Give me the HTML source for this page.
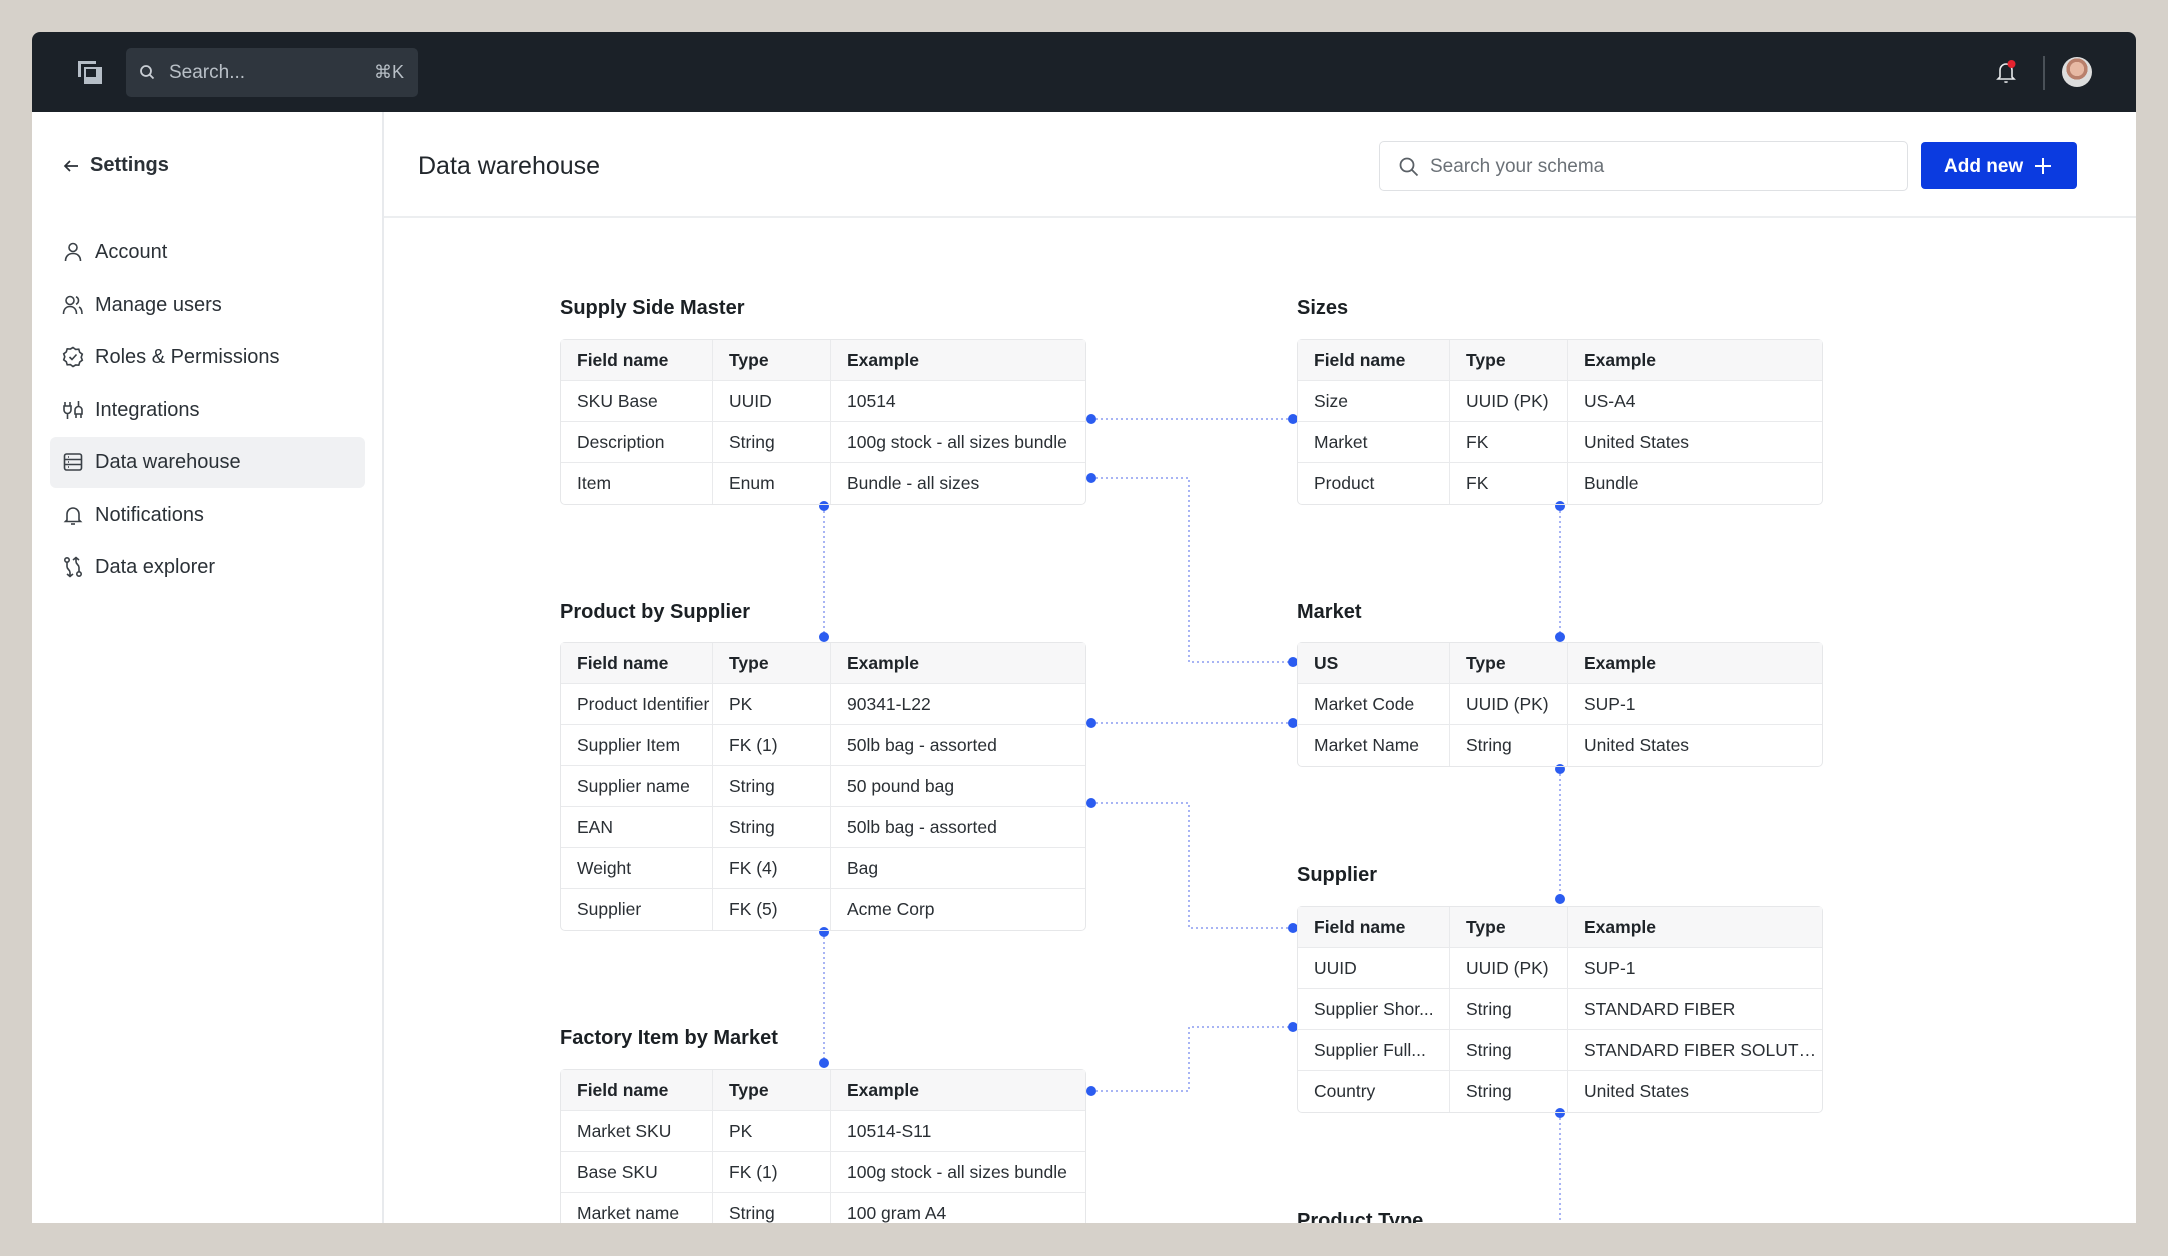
<!DOCTYPE html>
<html><head><meta charset="utf-8"><style>
*{box-sizing:border-box;margin:0;padding:0}
body{width:2168px;height:1256px;background:#d6d1ca;font-family:"Liberation Sans",Arial,sans-serif;position:relative;overflow:hidden;color:#1d2227}
#frame{position:absolute;left:32px;top:32px;width:2104px;height:1191px;background:#fff;border-radius:8px 8px 0 0;overflow:hidden}
#top{position:absolute;left:0;top:0;width:2104px;height:80px;background:#1b2128}
.abs{position:absolute}
#side{position:absolute;left:0;top:80px;width:352px;height:1111px;border-right:2px solid #e8eaed}
.nav{position:absolute;left:18px;width:315px;height:51px;font-size:20px;color:#2b3137;display:flex;align-items:center;padding-left:45px}
.nav svg{position:absolute;left:12px;top:14px}
.nav.act{background:#f0f1f3;border-radius:6px}
.ttl{position:absolute;font-size:20px;font-weight:bold;color:#1b2024}
table{position:absolute;border-collapse:separate;border-spacing:0;border:1.5px solid #e6e7e9;border-radius:5px;width:526px;font-size:17.5px;color:#2a2f34;table-layout:fixed}
td{height:41px;border-bottom:1.5px solid #e9eaec;padding-left:16px;padding-right:4px;white-space:nowrap;overflow:hidden;text-overflow:ellipsis}
tr:last-child td{border-bottom:none}
td:nth-child(1){width:152px;border-right:1.5px solid #e9eaec;padding-right:0;text-overflow:clip}
td:nth-child(2){width:118px;border-right:1.5px solid #e9eaec}
tr.h td{background:#f7f7f8;font-weight:bold;color:#1f2429}
</style></head><body>
<div id="frame">
<div id="top">
 <div class="abs" style="left:46px;top:29px;width:18px;height:16px;background:#b6bec7"></div>
 <div class="abs" style="left:52px;top:35px;width:18px;height:17px;background:#b6bec7;border:3px solid #1b2128;box-sizing:content-box;margin:-3px"></div>
 <div class="abs" style="left:54px;top:37px;width:10px;height:8px;background:#1b2128"></div>
 <div class="abs" style="left:94px;top:16px;width:292px;height:49px;background:#2f363e;border-radius:5px"></div>
 <svg class="abs" style="left:107px;top:32px" width="16" height="16" viewBox="0 0 16 16"><circle cx="7" cy="7" r="5" fill="none" stroke="#c9ced4" stroke-width="1.8"/><path d="M11 11l3.5 3.5" stroke="#c9ced4" stroke-width="1.8"/></svg>
 <div class="abs" style="left:137px;top:30px;font-size:19px;color:#b9c0c7">Search...</div>
 <div class="abs" style="left:342px;top:30px;font-size:18px;color:#b9c0c7">⌘K</div>
 <svg class="abs" style="left:1963px;top:27px" width="24" height="26" viewBox="0 0 24 26"><path d="M5 18V11a6 6 0 0 1 12 0v7l2 2H3z" fill="none" stroke="#e8eaec" stroke-width="1.6"/><path d="M9.5 22.5a2 2 0 0 0 3 0" stroke="#e8eaec" stroke-width="1.5" fill="none"/><circle cx="16.5" cy="5" r="4" fill="#e5232f"/></svg>
 <div class="abs" style="left:2011px;top:24px;width:2px;height:34px;background:#4a5158"></div>
 <div class="abs" style="left:2030px;top:25px;width:30px;height:30px;border-radius:50%;background:radial-gradient(circle at 50% 40%,#e7b9a4 0 30%,#b9806c 31% 45%,#ddd 46%)"></div>
</div>
<div id="side">
 <svg class="abs" style="left:30px;top:46px" width="18" height="16" viewBox="0 0 18 16"><path d="M16 8H3M8 3L3 8l5 5" fill="none" stroke="#2b3137" stroke-width="1.7"/></svg>
 <div class="abs" style="left:58px;top:42px;font-size:20px;font-weight:bold;color:#2b3137">Settings</div>
 <div class="nav" style="top:115px"><svg width="22" height="22" viewBox="0 0 22 22" fill="none" stroke="#3a4046" stroke-width="1.6"><circle cx="11" cy="6.5" r="4"/><path d="M3.5 20c0-5 3.3-7.5 7.5-7.5s7.5 2.5 7.5 7.5"/></svg>Account</div>
 <div class="nav" style="top:168px"><svg width="22" height="22" viewBox="0 0 22 22" fill="none" stroke="#3a4046" stroke-width="1.6"><circle cx="8" cy="6.5" r="4"/><path d="M1.5 20c0-5 2.8-7.5 6.5-7.5s6.5 2.5 6.5 7.5M14 2.8a4 4 0 0 1 0 7.4M17 13c2 1 3 3 3 7"/></svg>Manage users</div>
 <div class="nav" style="top:220px"><svg width="22" height="22" viewBox="0 0 22 22" fill="none" stroke="#3a4046" stroke-width="1.6"><path d="M11 1.5l2.6 1.9 3.2-.2.9 3.1 2.6 1.9-1.1 3 1.1 3-2.6 1.9-.9 3.1-3.2-.2L11 20.5l-2.6-1.9-3.2.2-.9-3.1L1.7 13.8l1.1-3-1.1-3 2.6-1.9.9-3.1 3.2.2z"/><path d="M7.5 11l2.5 2.5 4.5-5"/></svg>Roles &amp; Permissions</div>
 <div class="nav" style="top:273px"><svg width="22" height="22" viewBox="0 0 22 22" fill="none" stroke="#3a4046" stroke-width="1.6"><path d="M3 3v4M8 3v4M2 7h7v4a3.5 3.5 0 0 1-7 0zM5.5 14.5V20M14 19v-4M19 19v-4M13 15h7v-4a3.5 3.5 0 0 0-7 0zM16.5 7.5V2"/></svg>Integrations</div>
 <div class="nav act" style="top:325px"><svg width="22" height="22" viewBox="0 0 22 22" fill="none" stroke="#3a4046" stroke-width="1.6"><rect x="2.5" y="3" width="17" height="16" rx="2"/><path d="M2.5 8.5h17M2.5 13.5h17M6 6h1M6 11h1M6 16h1"/></svg>Data warehouse</div>
 <div class="nav" style="top:378px"><svg width="22" height="22" viewBox="0 0 22 22" fill="none" stroke="#3a4046" stroke-width="1.6"><path d="M5 16V10a6 6 0 0 1 12 0v6l1.5 1.5h-15z"/><path d="M9 20h4"/></svg>Notifications</div>
 <div class="nav" style="top:430px"><svg width="22" height="22" viewBox="0 0 22 22" fill="none" stroke="#3a4046" stroke-width="1.6"><circle cx="5" cy="4" r="2.2"/><circle cx="17" cy="18" r="2.2"/><path d="M5 6.5v4c0 3 3 3 3 6v4M17 15.5v-4c0-3-3-3-3-6V2M11 4l3-2.5 3 2.5M5 18l3 2.5 3-2.5"/></svg>Data explorer</div>
</div>
<div class="abs" style="left:386px;top:120px;font-size:25px;color:#22272c">Data warehouse</div>
<div class="abs" style="left:1347px;top:109px;width:529px;height:50px;border:1.5px solid #dfe1e4;border-radius:5px"></div>
<svg class="abs" style="left:1366px;top:124px" width="22" height="22" viewBox="0 0 22 22" fill="none" stroke="#5a6066" stroke-width="1.8"><circle cx="9" cy="9" r="6.5"/><path d="M14 14l5.5 5.5"/></svg>
<div class="abs" style="left:1398px;top:124px;font-size:19px;color:#6b7177">Search your schema</div>
<div class="abs" style="left:1889px;top:110px;width:156px;height:47px;background:#0b3be0;border-radius:4px;color:#fff;font-size:19px;font-weight:bold;padding:14px 0 0 23px">Add new</div>
<svg class="abs" style="left:2002px;top:125px" width="18" height="18" viewBox="0 0 18 18" stroke="#fff" stroke-width="2"><path d="M9 1v16M1 9h16"/></svg>
<div class="abs" style="left:352px;top:184px;width:1752px;height:2px;background:#eceef0"></div>

<svg class="abs" style="left:0;top:0" width="2104" height="1191" viewBox="32 32 2104 1191" fill="none">
<g stroke="#8a9cf0" stroke-width="1.5" stroke-dasharray="2 3">
<path d="M1091 419H1293M1091 478H1189V662H1293M824 506V637M1560 506V637M1091 723H1293M1091 803H1189V928H1293M824 932V1063M1560 769V899M1091 1091H1189V1027H1293M1560 1113V1223"/>
</g>
<g fill="#2b5cf0">
<circle cx="1091" cy="419" r="5"/><circle cx="1293" cy="419" r="5"/><circle cx="1091" cy="478" r="5"/><circle cx="1293" cy="662" r="5"/>
<circle cx="824" cy="506" r="5"/><circle cx="824" cy="637" r="5"/><circle cx="1560" cy="506" r="5"/><circle cx="1560" cy="637" r="5"/>
<circle cx="1091" cy="723" r="5"/><circle cx="1293" cy="723" r="5"/><circle cx="1091" cy="803" r="5"/><circle cx="1293" cy="928" r="5"/>
<circle cx="824" cy="932" r="5"/><circle cx="824" cy="1063" r="5"/><circle cx="1560" cy="769" r="5"/><circle cx="1560" cy="899" r="5"/>
<circle cx="1091" cy="1091" r="5"/><circle cx="1293" cy="1027" r="5"/><circle cx="1560" cy="1113" r="5"/>
</g></svg>

<div class="ttl" style="left:528px;top:265px">Supply Side Master</div>
<table style="left:528px;top:307px"><tr class="h"><td>Field name</td><td>Type</td><td>Example</td></tr>
<tr><td>SKU Base</td><td>UUID</td><td>10514</td></tr>
<tr><td>Description</td><td>String</td><td>100g stock - all sizes bundle</td></tr>
<tr><td>Item</td><td>Enum</td><td>Bundle - all sizes</td></tr></table>

<div class="ttl" style="left:1265px;top:265px">Sizes</div>
<table style="left:1265px;top:307px"><tr class="h"><td>Field name</td><td>Type</td><td>Example</td></tr>
<tr><td>Size</td><td>UUID (PK)</td><td>US-A4</td></tr>
<tr><td>Market</td><td>FK</td><td>United States</td></tr>
<tr><td>Product</td><td>FK</td><td>Bundle</td></tr></table>

<div class="ttl" style="left:528px;top:569px">Product by Supplier</div>
<table style="left:528px;top:610px"><tr class="h"><td>Field name</td><td>Type</td><td>Example</td></tr>
<tr><td>Product Identifier</td><td>PK</td><td>90341-L22</td></tr>
<tr><td>Supplier Item</td><td>FK (1)</td><td>50lb bag - assorted</td></tr>
<tr><td>Supplier name</td><td>String</td><td>50 pound bag</td></tr>
<tr><td>EAN</td><td>String</td><td>50lb bag - assorted</td></tr>
<tr><td>Weight</td><td>FK (4)</td><td>Bag</td></tr>
<tr><td>Supplier</td><td>FK (5)</td><td>Acme Corp</td></tr></table>

<div class="ttl" style="left:1265px;top:569px">Market</div>
<table style="left:1265px;top:610px"><tr class="h"><td>US</td><td>Type</td><td>Example</td></tr>
<tr><td>Market Code</td><td>UUID (PK)</td><td>SUP-1</td></tr>
<tr><td>Market Name</td><td>String</td><td>United States</td></tr></table>

<div class="ttl" style="left:1265px;top:832px">Supplier</div>
<table style="left:1265px;top:874px"><tr class="h"><td>Field name</td><td>Type</td><td>Example</td></tr>
<tr><td>UUID</td><td>UUID (PK)</td><td>SUP-1</td></tr>
<tr><td>Supplier Shor...</td><td>String</td><td>STANDARD FIBER</td></tr>
<tr><td>Supplier Full...</td><td>String</td><td>STANDARD FIBER SOLUTIO...</td></tr>
<tr><td>Country</td><td>String</td><td>United States</td></tr></table>

<div class="ttl" style="left:528px;top:995px">Factory Item by Market</div>
<table style="left:528px;top:1037px"><tr class="h"><td>Field name</td><td>Type</td><td>Example</td></tr>
<tr><td>Market SKU</td><td>PK</td><td>10514-S11</td></tr>
<tr><td>Base SKU</td><td>FK (1)</td><td>100g stock - all sizes bundle</td></tr>
<tr><td>Market name</td><td>String</td><td>100 gram A4</td></tr>
<tr><td>Extra</td><td>String</td><td>-</td></tr></table>

<div class="ttl" style="left:1265px;top:1178px">Product Type</div>
</div>
</body></html>
